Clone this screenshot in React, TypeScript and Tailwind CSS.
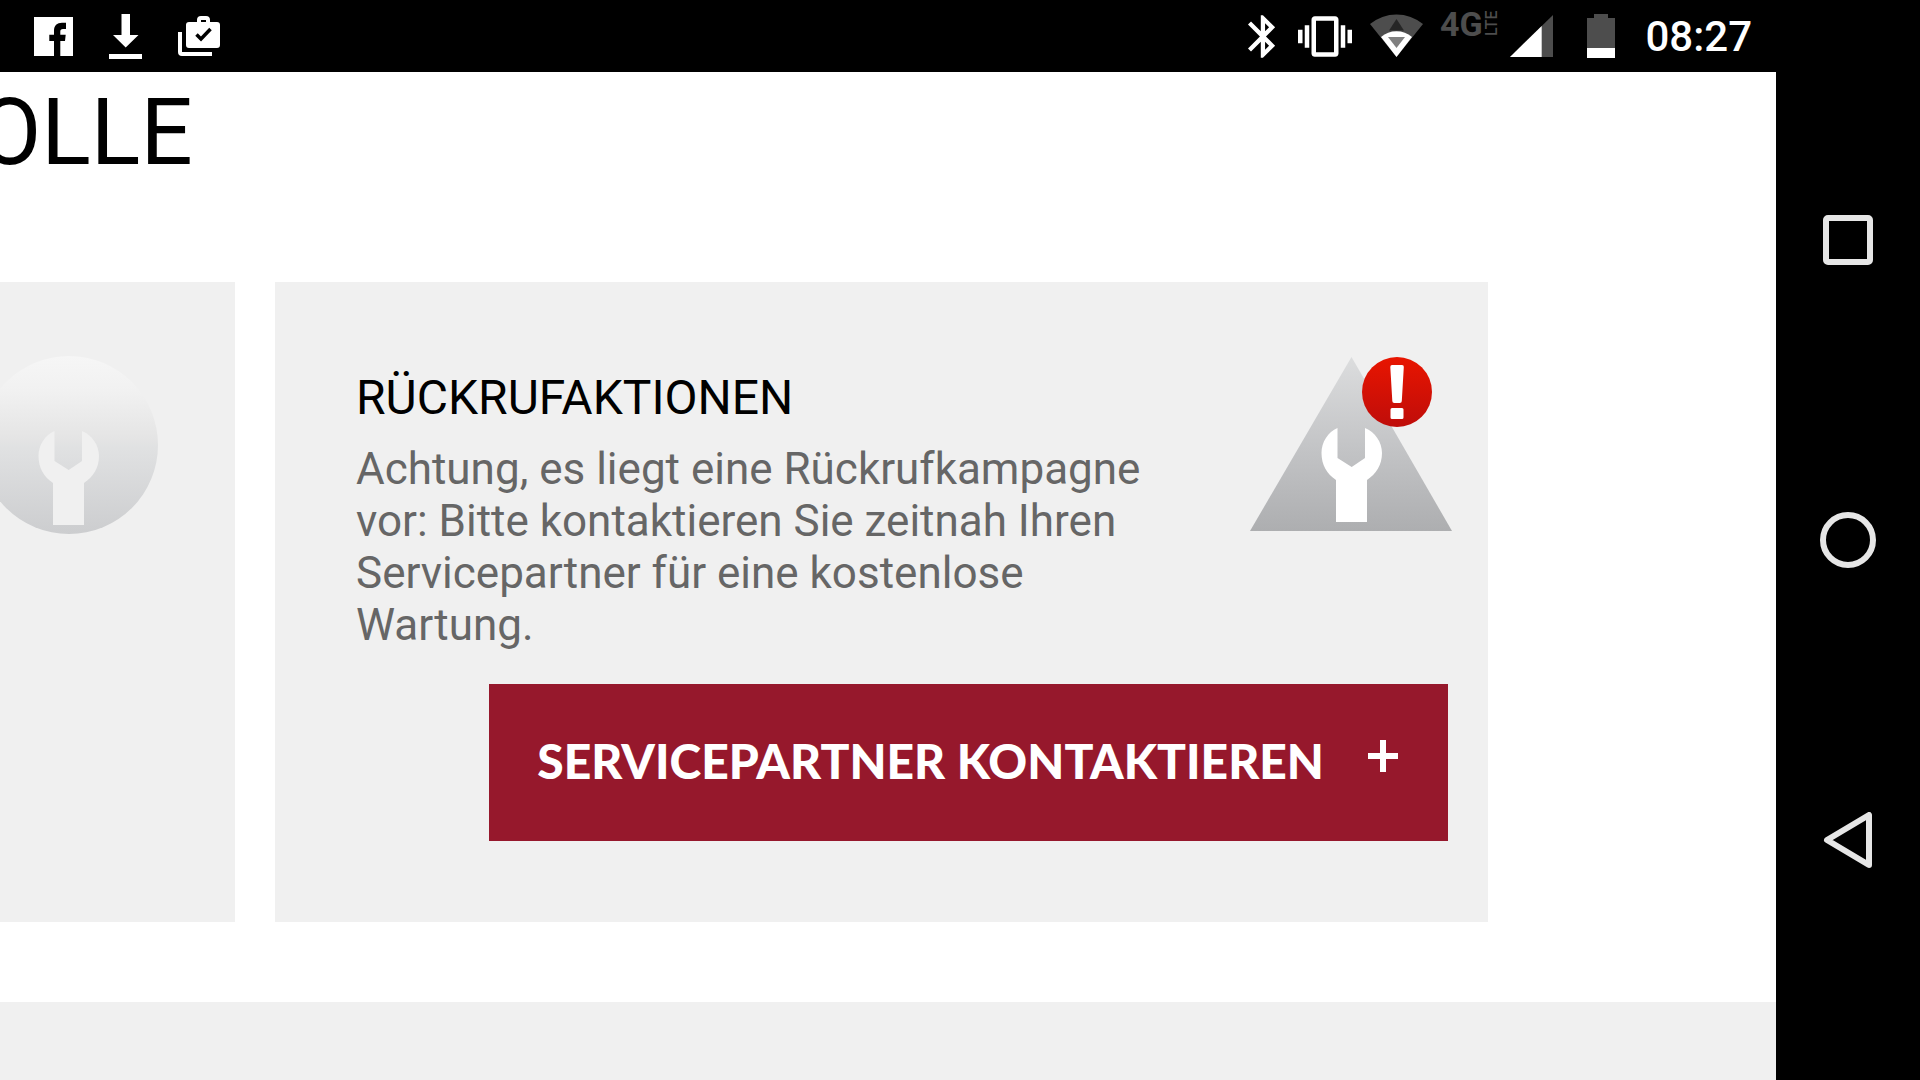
import type { ReactNode } from "react";

/** Wrench silhouette shared by both service icons */
function Wrench({ className, transform }: { className: string; transform?: string }) {
  return (
    <path
      className={className}
      transform={transform}
      d="M87.500 72C78 76 71.500 86 71.500 97C71.500 109 77 118 86 124V166H117V124C126 118 132 109 132 97C132 86 125 76 115 72V102L101.700 111L87.500 102Z"
    />
  );
}

function CheckIcon() {
  return (
    <svg className="w-[180px] h-[180px] shrink-0" viewBox="0 0 180 180" aria-hidden="true">
      <defs>
        <linearGradient id="disc" x1="0" y1="0" x2="0" y2="1">
          <stop offset="0" stopColor="#f6f6f6" />
          <stop offset="0.2" stopColor="#f1f1f1" />
          <stop offset="0.45" stopColor="#e5e5e5" />
          <stop offset="0.52" stopColor="#e0e1e2" />
          <stop offset="1" stopColor="#cccdcf" />
        </linearGradient>
      </defs>
      <circle cx="90" cy="90" r="89" fill="url(#disc)" />
      <Wrench className="fill-[#f0f0f0]" transform="translate(-12 4)" />
    </svg>
  );
}

function RecallIcon() {
  return (
    <svg className="w-[202px] h-[176px] shrink-0" viewBox="0 0 202 176" aria-hidden="true">
      <defs>
        <linearGradient id="warning" x1="0" y1="0" x2="0" y2="1">
          <stop offset="0" stopColor="#dcddde" />
          <stop offset="0.5" stopColor="#c4c5c7" />
          <stop offset="1" stopColor="#adaeb0" />
        </linearGradient>
        <linearGradient id="badge" x1="0" y1="0" x2="0" y2="1">
          <stop offset="0" stopColor="#e81500" />
          <stop offset="1" stopColor="#bf0d0a" />
        </linearGradient>
      </defs>
      <path d="M101.500 1L202 175H0Z" fill="url(#warning)" />
      <Wrench className="fill-white" />
      <circle cx="147" cy="36" r="35" fill="url(#badge)" />
      <path d="M142 9h10q2 0 1.800 2l-2 34q0 2-2 2h-5.500q-2 0-2-2l-2-34q0-2 1.700-2zM142 52h10q1.500 0 1.500 1.500v8q0 1.500-1.500 1.500h-10q-1.500 0-1.500-1.500v-8q0-1.500 1.500-1.500z" fill="white" />
    </svg>
  );
}

function StatusBar() {
  return (
    <header className="flex h-[72px] shrink-0 items-center justify-between bg-black pl-[34px] pr-6 text-white">
      <div className="flex items-center gap-9">
        {/* Facebook */}
        <svg className="w-[39px] h-[39px]" viewBox="0 0 39 39" aria-hidden="true">
          <path fill="currentColor" d="M0 0H39V39H0Z" />
          <path d="M20 39V24h-4.700v-6.300H20v-4C20 8.600 23 5.700 28 5.700h4V12h-3c-2 0-2.700 1-2.700 2.700v3h5.400l-.7 6.300h-4.700v15z" />
        </svg>
        {/* Download */}
        <svg className="w-[33px] h-[45px]" viewBox="0 0 33 45" fill="currentColor" aria-hidden="true">
          <path d="M12.500 0H21V21H29.500L16.700 33.500L4 21H12.500ZM0 40H33V45H0Z" />
        </svg>
        {/* App updates */}
        <svg className="w-[42px] h-10" viewBox="0 0 42 40" aria-hidden="true">
          <path
            fill="currentColor"
            fillRule="evenodd"
            d="M0 16H4V36H34V40H4Q0 40 0 36ZM11 6H19V4Q19 0 23 0H28Q32 0 32 4V6H39Q42 6 42 9V29Q42 32 39 32H11Q8 32 8 29V9Q8 6 11 6ZM23 4V6H28V4Z"
          />
          <path d="M18.500 18.500L23 23L32.500 13" fill="none" stroke="black" strokeWidth="3.500" />
        </svg>
      </div>

      <div className="flex items-center gap-[18px]">
        {/* Bluetooth */}
        <svg className="w-8 h-[43px]" viewBox="5 2 15 20" fill="currentColor" aria-hidden="true">
          <path d="M17.710 7.710L12 2h-1v7.590L6.410 5 5 6.410 10.590 12 5 17.590 6.410 19 11 14.410V22h1l5.710-5.710-4.300-4.290 4.300-4.290zM13 5.830l1.880 1.880L13 9.590V5.830zm1.880 10.460L13 18.170v-3.760l1.880 1.880z" />
        </svg>
        {/* Vibration */}
        <svg className="w-[54px] h-[41px]" viewBox="0 3 24 18" fill="currentColor" aria-hidden="true">
          <path d="M0 15h2V9H0v6zm3 2h2V7H3v10zm19-8v6h2V9h-2zm-3 8h2V7h-2v10zM16.500 3h-9C6.670 3 6 3.670 6 4.500v15c0 .83.67 1.500 1.500 1.500h9c.83 0 1.500-.67 1.500-1.500v-15c0-.83-.67-1.500-1.500-1.500zM16 19H8V5h8v14z" />
        </svg>
        {/* Wifi */}
        <svg className="w-[53px] h-11" viewBox="0 0 53 44" aria-hidden="true">
          <path d="M0 10A41.700 41.700 0 0 1 53 10L26.500 43Z" fill="#4d4d4d" />
          <path d="M11 23A24 24 0 0 1 42 23L26.500 43Z" fill="white" />
          <path d="M26.500 5L34 16.500H19Z" fill="#262626" />
          <path d="M18 23H35L26.500 34Z" fill="#808080" />
        </svg>
        {/* 4G LTE */}
        <svg className="w-[51px] h-[46px] overflow-visible font-['Roboto',sans-serif] font-bold" viewBox="0 0 51 46" fill="#4d4d4d">
          <text x="-1" y="23" fontSize="34">4G</text>
          <text transform="translate(56 23) rotate(-90)" fontSize="16" fontWeight="500">LTE</text>
        </svg>
        {/* Signal */}
        <svg className="w-[43px] h-[42px]" viewBox="0 0 43 42" aria-hidden="true">
          <path d="M43 0V42H0Z" fill="#4d4d4d" />
          <path d="M31.700 11V42H0Z" fill="white" />
        </svg>
        {/* Battery */}
        <svg className="ml-4 w-7 h-11" viewBox="0 0 28 44" aria-hidden="true">
          <path d="M7 0H21V4H28V44H0V4H7Z" fill="#4d4d4d" />
          <path d="M0 34H28V44H0Z" fill="white" />
        </svg>
        <time className="ml-3 pt-0.5 font-medium text-[42px] leading-none">08:27</time>
      </div>
    </header>
  );
}

function NavButton({ label, children }: { label: string; children: ReactNode }) {
  return (
    <button type="button" aria-label={label} className="flex flex-1 w-full items-center justify-center">
      <svg className="w-14 h-14" viewBox="0 0 56 56" fill="none" stroke="#e6e6e6" strokeWidth="6" strokeLinejoin="round">
        {children}
      </svg>
    </button>
  );
}

export default function App() {
  return (
    <div className="flex min-h-screen bg-black font-['Roboto',sans-serif]">
      <div className="flex min-w-0 flex-1 flex-col">
        <StatusBar />

        <main className="flex flex-1 flex-col overflow-hidden bg-white">
          <h1 className="-ml-[22px] pt-1.5 text-[92px] leading-[110px] text-black">OLLE</h1>

          <div className="mt-[94px] mr-72 flex min-h-[640px] gap-10">
            <section className="flex w-[235px] shrink-0 justify-end overflow-hidden bg-[#f0f0f0] pt-[73px] pr-[76px]">
              <CheckIcon />
            </section>

            <section className="flex-1 bg-[#f0f0f0] pt-[74px] pr-9 pl-[81px]">
              <div className="flex justify-between gap-12">
                <div className="pt-3">
                  <h2 className="text-[48px] leading-[60px] text-black">RÜCKRUFAKTIONEN</h2>
                  <p className="mt-[15px] text-[44px] leading-[52px] text-[#666666]">
                    Achtung, es liegt eine Rückrufkampagne vor: Bitte kontaktieren Sie zeitnah Ihren
                    Servicepartner für eine kostenlose Wartung.
                  </p>
                </div>
                <RecallIcon />
              </div>

              <div className="mt-[33px] mr-1 flex justify-end">
                <button
                  type="button"
                  className="flex h-[157px] items-center gap-11 bg-[#96182c] pr-[50px] pb-1 pl-12 font-['Lato',sans-serif] text-[48px] font-black text-white"
                >
                  <span>SERVICEPARTNER KONTAKTIEREN</span>
                  <svg className="mb-2.5 w-[30px] h-8" viewBox="0 0 30 32" stroke="currentColor" strokeWidth="6" aria-hidden="true">
                    <path d="M15 0V32M0 16H30" />
                  </svg>
                </button>
              </div>
            </section>
          </div>

          <footer className="mt-20 flex-1 bg-[#f0f0f0]" />
        </main>
      </div>

      <nav className="flex w-36 shrink-0 flex-col items-center py-[90px]">
        <NavButton label="Recent apps">
          <rect x="6" y="6" width="44" height="44" rx="2" />
        </NavButton>
        <NavButton label="Home">
          <circle cx="28" cy="28" r="25" />
        </NavButton>
        <NavButton label="Back">
          <path d="M49 3V53L7 28Z" />
        </NavButton>
      </nav>
    </div>
  );
}
